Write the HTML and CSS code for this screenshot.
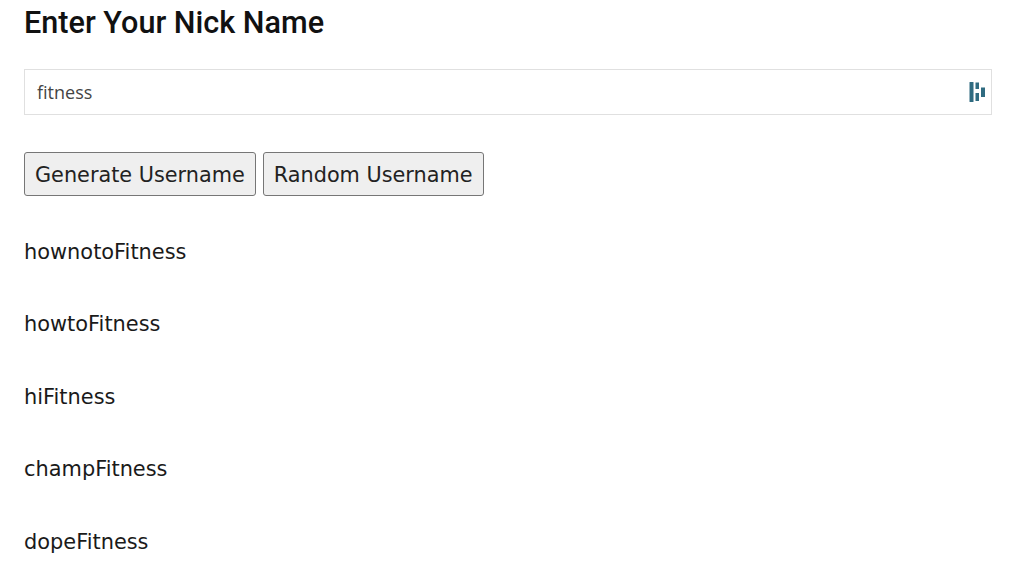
FILE: index.html
```html
<!DOCTYPE html>
<html lang="en">
<head>
    <meta charset="UTF-8">
    <meta name="viewport" content="width=device-width, initial-scale=1.0">
    <title>Username Generator</title>
    <link rel="stylesheet" href="styles.css">
</head>
<body>
    <h2 class="title">Enter Your Nick Name</h2>
    <div class="field">
        <input class="nick" type="text" value="fitness">
        <svg class="field-icon" width="16" height="20" viewBox="0 0 16 20">
            <rect x="0.5" y="0" width="4" height="20" rx="0.5" fill="#2f6b80"/>
            <rect x="6.5" y="0.5" width="3.5" height="6.5" fill="#2f6b80"/>
            <rect x="6.5" y="11" width="3.5" height="8" fill="#2f6b80"/>
            <rect x="12" y="5.5" width="4" height="9.5" fill="#2f6b80"/>
        </svg>
    </div>
    <div class="actions">
        <button>Generate Username</button>
        <button>Random Username</button>
    </div>
    <div class="names">
        <p>hownotoFitness</p>
        <p>howtoFitness</p>
        <p>hiFitness</p>
        <p>champFitness</p>
        <p>dopeFitness</p>
    </div>
</body>
</html>
```

FILE: styles.css
```css
body {
    margin: 0;
    padding: 0 32px 0 24px;
    background-color: white;
    color: #1a1a1a;
    font-family: "DejaVu Sans", sans-serif;
    overflow: hidden;
}
.title {
    font-family: Roboto, sans-serif;
    font-size: 30.6px;
    font-weight: 500;
    line-height: 46px;
    margin: 0 0 23px;
    color: #111;
}
.field {
    position: relative;
    height: 46px;
}
.nick {
    box-sizing: border-box;
    width: 100%;
    height: 46px;
    padding: 0 12px;
    border: 1px solid #e0e0e0;
    font-family: "Open Sans", sans-serif;
    font-size: 18px;
    color: #444;
    outline: none;
}
.field-icon {
    position: absolute;
    right: 7px;
    top: 13px;
}
.actions {
    display: flex;
    gap: 7px;
    margin-top: 37px;
}
button {
    height: 44px;
    padding: 2px 10px 0;
    border: 1px solid #767676;
    border-radius: 3px;
    background-color: #efefef;
    color: #222;
    font-family: "DejaVu Sans", sans-serif;
    font-size: 20.8px;
}
.names {
    margin-top: 44px;
}
.names p {
    margin: 0 0 48px;
    font-size: 20.9px;
    line-height: 24.4px;
}
```
